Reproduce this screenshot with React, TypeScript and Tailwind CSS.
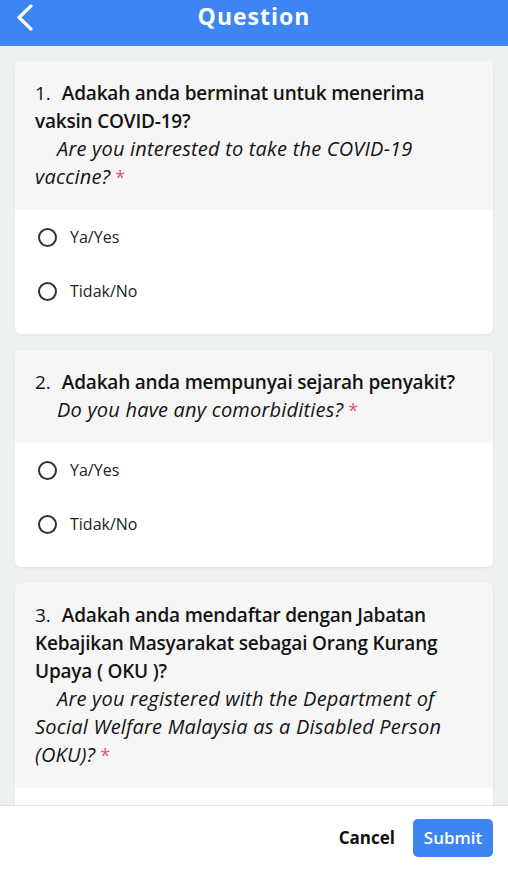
import { useState } from "react";

type Question = {
  no: string;
  malay: string[];
  english: string[];
};

const questions: Question[] = [
  {
    no: "1.",
    malay: ["Adakah anda berminat untuk menerima", "vaksin COVID-19?"],
    english: ["Are you interested to take the COVID-19", "vaccine?"],
  },
  {
    no: "2.",
    malay: ["Adakah anda mempunyai sejarah penyakit?"],
    english: ["Do you have any comorbidities?"],
  },
  {
    no: "3.",
    malay: ["Adakah anda mendaftar dengan Jabatan", "Kebajikan Masyarakat sebagai Orang Kurang", "Upaya ( OKU )?"],
    english: ["Are you registered with the Department of", "Social Welfare Malaysia as a Disabled Person", "(OKU)?"],
  },
];

const options = ["Ya/Yes", "Tidak/No"];

const QuestionCard = ({ q }: { q: Question }) => {
  const [picked, setPicked] = useState("");

  return (
    <div className="shrink-0 mx-[15px] rounded-[6px] overflow-hidden bg-white shadow-[0_1px_3px_rgba(0,0,0,0.06)]">
      <div className="bg-[#f6f6f6] px-[20px] pt-[18px] pb-[19px] leading-[28px] text-[#141414] whitespace-nowrap">
        {q.malay.map((line, i) => (
          <p key={line} className="text-[19px]">
            {i === 0 && <span className="pr-[11px]">{q.no}</span>}
            <span className="font-semibold tracking-[-0.2px]">{line}</span>
          </p>
        ))}
        {q.english.map((line, i) => (
          <p key={line} className={"italic text-[20px] tracking-[0.2px] " + (i === 0 ? "pl-[22px]" : "")}>
            {line}
            {i === q.english.length - 1 && <span className="not-italic text-[18px] text-[#d65a73]"> *</span>}
          </p>
        ))}
      </div>
      <div className="pb-[16px]">
        {options.map((opt) => (
          <label key={opt} className="flex items-center h-[54px] px-[23px] gap-[13px] cursor-pointer" onClick={() => setPicked(opt)}>
            <span className="w-[19px] h-[19px] rounded-full border-2 border-[#333] flex items-center justify-center">
              {picked === opt && <span className="w-[9px] h-[9px] rounded-full bg-[#333]"></span>}
            </span>
            <span className="text-[16px] text-[#222]">{opt}</span>
          </label>
        ))}
      </div>
    </div>
  );
};

const App = () => {
  return (
    <div className="h-[870px] w-full flex flex-col bg-[#edf0f1] overflow-hidden" style={{ fontFamily: "'Open Sans', 'Noto Sans', sans-serif" }}>
      <div className="h-[46px] shrink-0 bg-[#3e85f4] relative flex justify-center">
        <svg className="absolute left-[15px] top-[4px]" width="22" height="28" viewBox="0 0 22 28" fill="none">
          <polyline points="16,2 4,13.5 16,25" stroke="white" strokeWidth="3.2" strokeLinecap="round" strokeLinejoin="round" />
        </svg>
        <h1 className="text-white text-[23px] leading-[32px] font-bold tracking-[1px]">Question</h1>
      </div>

      <div className="flex-1 min-h-0 overflow-hidden pt-[15px] flex flex-col gap-[16px]">
        {questions.map((q) => (
          <QuestionCard key={q.no} q={q} />
        ))}
      </div>

      <div className="h-[65px] shrink-0 bg-white border-t border-[#e4e4e4] flex items-center justify-end gap-[18px] pr-[15px]">
        <button className="text-[17px] font-bold text-[#111]">Cancel</button>
        <button className="w-[80px] h-[38px] rounded-[5px] bg-[#3e85f4] text-white text-[17px] font-semibold">Submit</button>
      </div>
    </div>
  );
};

export default App;
